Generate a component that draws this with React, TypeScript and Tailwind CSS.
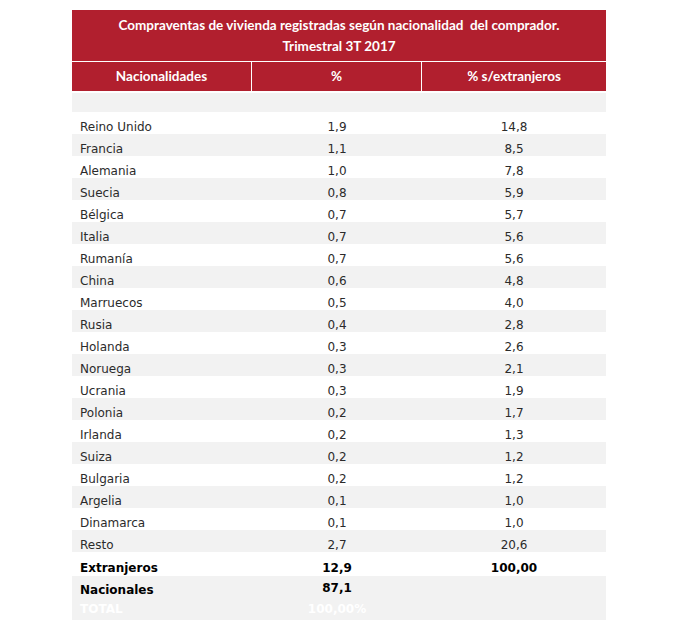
const rows: [string, string, string][] = [
  ["Reino Unido", "1,9", "14,8"],
  ["Francia", "1,1", "8,5"],
  ["Alemania", "1,0", "7,8"],
  ["Suecia", "0,8", "5,9"],
  ["Bélgica", "0,7", "5,7"],
  ["Italia", "0,7", "5,6"],
  ["Rumanía", "0,7", "5,6"],
  ["China", "0,6", "4,8"],
  ["Marruecos", "0,5", "4,0"],
  ["Rusia", "0,4", "2,8"],
  ["Holanda", "0,3", "2,6"],
  ["Noruega", "0,3", "2,1"],
  ["Ucrania", "0,3", "1,9"],
  ["Polonia", "0,2", "1,7"],
  ["Irlanda", "0,2", "1,3"],
  ["Suiza", "0,2", "1,2"],
  ["Bulgaria", "0,2", "1,2"],
  ["Argelia", "0,1", "1,0"],
  ["Dinamarca", "0,1", "1,0"],
  ["Resto", "2,7", "20,6"],
];

export default function App() {
  return (
    <div className="min-h-[623px] bg-white pt-[10px] pl-[72px]">
      <div className="w-[534px]">
        {/* Title */}
        <div className="bg-[#b11f2e] h-[51px] flex flex-col items-center justify-center text-white font-bold text-[13.5px] leading-[21px] font-['Lato',sans-serif]">
          <div className="whitespace-pre">Compraventas de vivienda registradas según nacionalidad  del comprador.</div>
          <div className="whitespace-pre">Trimestral 3T 2017</div>
        </div>
        {/* Column headers */}
        <div className="mt-px grid grid-cols-[180px_170px_1fr] h-[29px] bg-[#b11f2e] text-white font-bold text-[13.5px] font-['Lato',sans-serif]">
          <div className="flex items-center justify-center border-r border-white">Nacionalidades</div>
          <div className="flex items-center justify-center border-r border-white">%</div>
          <div className="flex items-center justify-center">% s/extranjeros</div>
        </div>

        <div className="mt-[2px] h-[19px] bg-[#f2f2f2]" />

        <div className="font-['DejaVu_Sans',sans-serif] text-[12px] leading-[14px] text-[#2b2b2b]">
          {rows.map(([name, pct, ext], i) => (
            <div
              key={name}
              className={`grid grid-cols-[180px_170px_1fr] h-[22px] items-end ${i % 2 === 1 ? "bg-[#f2f2f2]" : "bg-white"}`}
            >
              <div className="pl-[8px]">{name}</div>
              <div className="text-center">{pct}</div>
              <div className="text-center">{ext}</div>
            </div>
          ))}
          <div className="grid grid-cols-[180px_170px_1fr] h-[23px] items-end font-bold text-[12px] text-black">
            <div className="pl-[8px]">Extranjeros</div>
            <div className="text-center">12,9</div>
            <div className="text-center">100,00</div>
          </div>
          <div className="mt-px bg-[#f2f2f2]">
            <div className="grid grid-cols-[180px_170px_1fr] h-[22px] items-end pb-px font-bold text-[12px] text-black">
              <div className="pl-[8px]">Nacionales</div>
              <div className="text-center pb-[2px]">87,1</div>
              <div />
            </div>
            <div className="grid grid-cols-[180px_170px_1fr] h-[22px] items-center font-bold text-[12px] text-white">
              <div className="pl-[8px]">TOTAL</div>
              <div className="text-center">100,00%</div>
              <div />
            </div>
          </div>
        </div>
      </div>
    </div>
  );
}
